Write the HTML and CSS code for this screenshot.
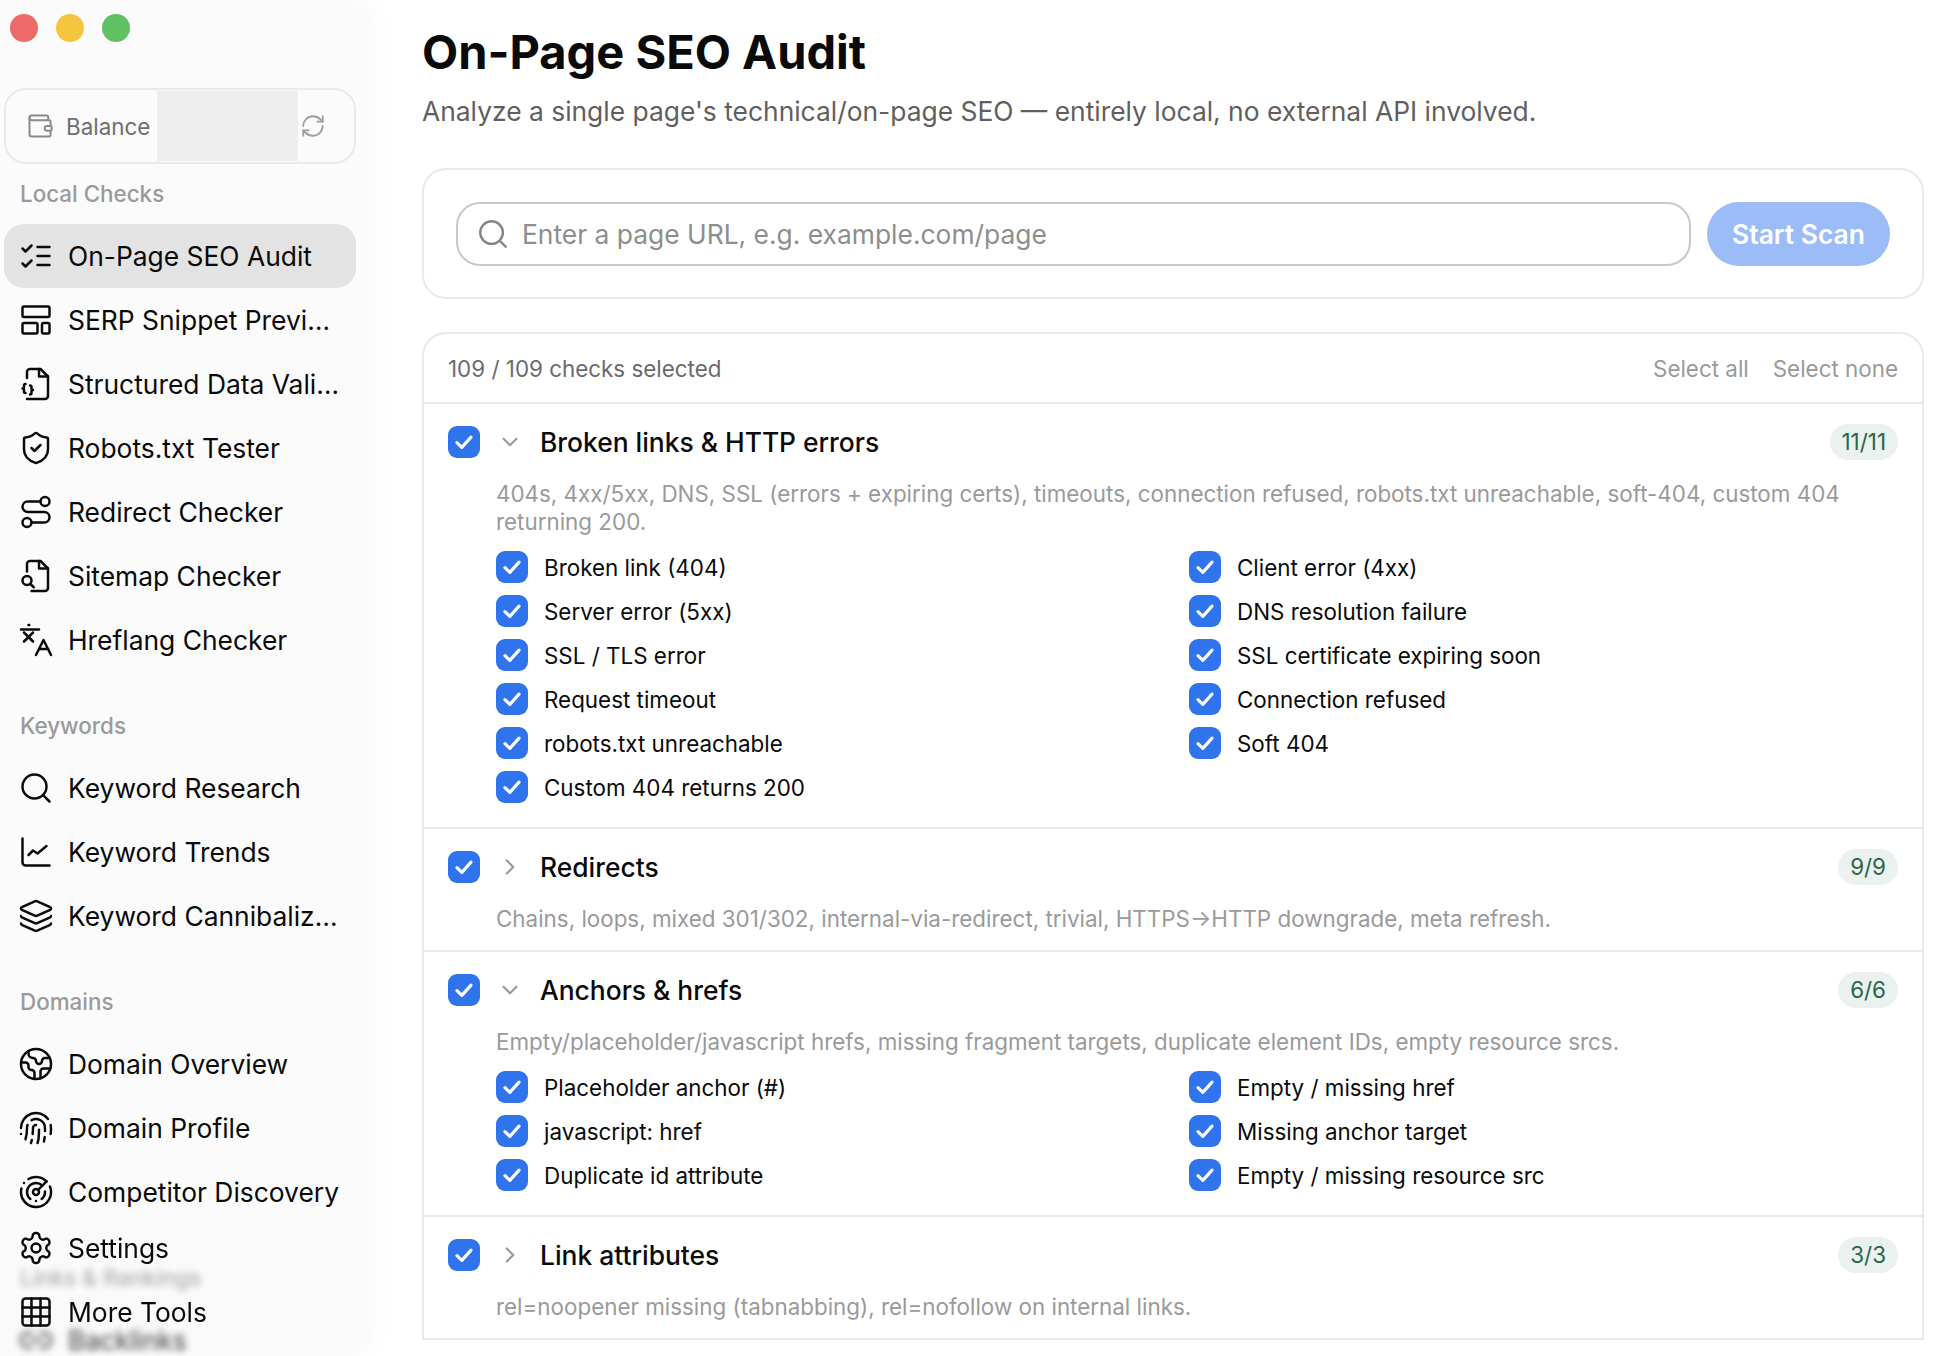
FILE: index.html
```html
<!DOCTYPE html>
<html lang="en">
<head>
    <meta charset="UTF-8">
    <title>On-Page SEO Audit</title>
    <link rel="stylesheet" href="styles.css">
</head>
<body>

    <!-- Icon sprite -->
    <svg class="sprite" xmlns="http://www.w3.org/2000/svg">
        <symbol id="i-wallet" viewBox="0 0 24 24"><path d="M19 7V4a1 1 0 0 0-1-1H5a2 2 0 0 0 0 4h15a1 1 0 0 1 1 1v4h-3a2 2 0 0 0 0 4h3a1 1 0 0 0 1-1v-2a1 1 0 0 0-1-1"/><path d="M3 5v14a2 2 0 0 0 2 2h15a1 1 0 0 0 1-1v-4"/></symbol>
        <symbol id="i-refresh" viewBox="0 0 24 24"><path d="M3 12a9 9 0 0 1 9-9 9.75 9.75 0 0 1 6.74 2.74L21 8"/><path d="M21 3v5h-5"/><path d="M21 12a9 9 0 0 1-9 9 9.75 9.75 0 0 1-6.74-2.74L3 16"/><path d="M8 16H3v5"/></symbol>
        <symbol id="i-list" viewBox="0 0 24 24"><path d="m3 17 2 2 4-4"/><path d="m3 7 2 2 4-4"/><path d="M13 6h8"/><path d="M13 12h8"/><path d="M13 18h8"/></symbol>
        <symbol id="i-layout" viewBox="0 0 24 24"><rect x="3" y="3" width="18" height="7" rx="1"/><rect x="3" y="14" width="10" height="7" rx="1"/><rect x="16" y="14" width="5" height="7" rx="1"/></symbol>
        <symbol id="i-braces" viewBox="0 0 24 24"><path d="M6 8V4a2 2 0 0 1 2-2h7l5 5v13a2 2 0 0 1-2 2H6"/><path d="M14 2v5h6"/><path d="M5 12a1 1 0 0 0-1 1v1a1 1 0 0 1-1 1 1 1 0 0 1 1 1v1a1 1 0 0 0 1 1"/><path d="M8 19a1 1 0 0 0 1-1v-1a1 1 0 0 1 1-1 1 1 0 0 1-1-1v-1a1 1 0 0 0-1-1"/></symbol>
        <symbol id="i-shield" viewBox="0 0 24 24"><path d="M20 13c0 5-3.5 7.5-7.66 8.95a1 1 0 0 1-.67-.01C7.5 20.5 4 18 4 13V6a1 1 0 0 1 1-1c2 0 4.5-1.2 6.24-2.72a1.17 1.17 0 0 1 1.52 0C14.51 3.81 17 5 19 5a1 1 0 0 1 1 1z"/><path d="m9 12 2 2 4-4"/></symbol>
        <symbol id="i-route" viewBox="0 0 24 24"><circle cx="6" cy="19" r="3"/><path d="M9 19h8.5a3.5 3.5 0 0 0 0-7h-11a3.5 3.5 0 0 1 0-7H15"/><circle cx="18" cy="5" r="3"/></symbol>
        <symbol id="i-filesearch" viewBox="0 0 24 24"><path d="M6 9V4a2 2 0 0 1 2-2h7l5 5v13a2 2 0 0 1-2 2H9"/><path d="M14 2v5h6"/><circle cx="6" cy="15" r="3"/><path d="m8.2 17.2 2.3 2.3"/></symbol>
        <symbol id="i-lang" viewBox="0 0 24 24"><path d="M2 5h12"/><path d="M7 2h.5"/><path d="m4 7 6 6"/><path d="m10 7-6 6"/><path d="m22 22-5-10-5 10"/><path d="M14 18h6"/></symbol>
        <symbol id="i-search" viewBox="0 0 24 24"><circle cx="11" cy="11" r="8"/><path d="m21 21-4.3-4.3"/></symbol>
        <symbol id="i-chart" viewBox="0 0 24 24"><path d="M3 3v16a2 2 0 0 0 2 2h16"/><path d="m7 14 3-3 3 2 6-5"/></symbol>
        <symbol id="i-layers" viewBox="0 0 24 24"><path d="M12.83 2.18a2 2 0 0 0-1.66 0L2.6 6.08a1 1 0 0 0 0 1.83l8.58 3.91a2 2 0 0 0 1.66 0l8.58-3.9a1 1 0 0 0 0-1.83z"/><path d="M2 12a1 1 0 0 0 .58.91l8.6 3.91a2 2 0 0 0 1.65 0l8.58-3.9A1 1 0 0 0 22 12"/><path d="M2 17a1 1 0 0 0 .58.91l8.6 3.91a2 2 0 0 0 1.65 0l8.58-3.9A1 1 0 0 0 22 17"/></symbol>
        <symbol id="i-earth" viewBox="0 0 24 24"><path d="M21.54 15H17a2 2 0 0 0-2 2v4.54"/><path d="M7 3.34V5a3 3 0 0 0 3 3a2 2 0 0 1 2 2c0 1.1.9 2 2 2a2 2 0 0 0 2-2c0-1.1.9-2 2-2h3.17"/><path d="M11 21.95V18a2 2 0 0 0-2-2a2 2 0 0 1-2-2v-1a2 2 0 0 0-2-2H2.05"/><circle cx="12" cy="12" r="10"/></symbol>
        <symbol id="i-finger" viewBox="0 0 24 24"><path d="M12 10a2 2 0 0 0-2 2c0 1.02-.1 2.51-.26 4"/><path d="M14 13.12c0 2.38 0 6.38-1 8.88"/><path d="M17.29 21.02c.12-.6.43-2.3.5-3.02"/><path d="M2 12a10 10 0 0 1 18-6"/><path d="M2 16h.01"/><path d="M21.8 16c.2-2 .131-5.354 0-6"/><path d="M5 19.5C5.5 18 6 15 6 12a6 6 0 0 1 .34-2"/><path d="M8.65 22c.21-.66.45-1.32.57-2"/><path d="M9 6.8a6 6 0 0 1 9 5.2v2"/></symbol>
        <symbol id="i-radar" viewBox="0 0 24 24"><path d="M19.07 4.93A10 10 0 0 0 6.99 3.34"/><path d="M4 6h.01"/><path d="M2.29 9.62A10 10 0 1 0 21.31 8.35"/><path d="M16.24 7.76A6 6 0 1 0 8.23 16.67"/><path d="M12 18h.01"/><path d="M17.99 11.66A6 6 0 0 1 15.77 16.67"/><circle cx="12" cy="12" r="2"/><path d="m13.41 10.59 5.66-5.66"/></symbol>
        <symbol id="i-gear" viewBox="0 0 24 24"><path d="M12.22 2h-.44a2 2 0 0 0-2 2v.18a2 2 0 0 1-1 1.73l-.43.25a2 2 0 0 1-2 0l-.15-.08a2 2 0 0 0-2.73.73l-.22.38a2 2 0 0 0 .73 2.73l.15.1a2 2 0 0 1 1 1.72v.51a2 2 0 0 1-1 1.74l-.15.09a2 2 0 0 0-.73 2.73l.22.38a2 2 0 0 0 2.73.73l.15-.08a2 2 0 0 1 2 0l.43.25a2 2 0 0 1 1 1.73V20a2 2 0 0 0 2 2h.44a2 2 0 0 0 2-2v-.18a2 2 0 0 1 1-1.73l.43-.25a2 2 0 0 1 2 0l.15.08a2 2 0 0 0 2.73-.73l.22-.39a2 2 0 0 0-.73-2.73l-.15-.08a2 2 0 0 1-1-1.74v-.5a2 2 0 0 1 1-1.74l.15-.09a2 2 0 0 0 .73-2.73l-.22-.38a2 2 0 0 0-2.73-.73l-.15.08a2 2 0 0 1-2 0l-.43-.25a2 2 0 0 1-1-1.73V4a2 2 0 0 0-2-2z"/><circle cx="12" cy="12" r="3"/></symbol>
        <symbol id="i-grid" viewBox="0 0 24 24"><rect x="3" y="3" width="18" height="18" rx="2"/><path d="M3 9h18"/><path d="M3 15h18"/><path d="M9 3v18"/><path d="M15 3v18"/></symbol>
        <symbol id="i-link" viewBox="0 0 24 24"><path d="M9 17H7A5 5 0 0 1 7 7h2"/><path d="M15 7h2a5 5 0 1 1 0 10h-2"/><path d="M8 12h8"/></symbol>
        <symbol id="i-down" viewBox="0 0 24 24"><path d="m6 9 6 6 6-6"/></symbol>
        <symbol id="i-right" viewBox="0 0 24 24"><path d="m9 18 6-6-6-6"/></symbol>
        <symbol id="i-check" viewBox="0 0 24 24"><path d="M5.5 12.5 10 17l8.5-9.5"/></symbol>
    </svg>

    <div class="app">

        <!-- Sidebar -->
        <aside class="sidebar">
            <div class="traffic">
                <span class="light red"></span>
                <span class="light yellow"></span>
                <span class="light green"></span>
            </div>

            <div class="balance">
                <svg class="balance-icon"><use href="#i-wallet"/></svg>
                <span class="balance-label">Balance</span>
                <span class="balance-value"></span>
                <svg class="balance-refresh"><use href="#i-refresh"/></svg>
            </div>

            <div class="nav-section first">Local Checks</div>
            <a class="nav-item active"><svg class="nav-icon"><use href="#i-list"/></svg><span class="nav-text">On-Page SEO Audit</span></a>
            <a class="nav-item"><svg class="nav-icon"><use href="#i-layout"/></svg><span class="nav-text">SERP Snippet Preview</span></a>
            <a class="nav-item"><svg class="nav-icon"><use href="#i-braces"/></svg><span class="nav-text">Structured Data Validator</span></a>
            <a class="nav-item"><svg class="nav-icon"><use href="#i-shield"/></svg><span class="nav-text">Robots.txt Tester</span></a>
            <a class="nav-item"><svg class="nav-icon"><use href="#i-route"/></svg><span class="nav-text">Redirect Checker</span></a>
            <a class="nav-item"><svg class="nav-icon"><use href="#i-filesearch"/></svg><span class="nav-text">Sitemap Checker</span></a>
            <a class="nav-item"><svg class="nav-icon"><use href="#i-lang"/></svg><span class="nav-text">Hreflang Checker</span></a>

            <div class="nav-section">Keywords</div>
            <a class="nav-item"><svg class="nav-icon"><use href="#i-search"/></svg><span class="nav-text">Keyword Research</span></a>
            <a class="nav-item"><svg class="nav-icon"><use href="#i-chart"/></svg><span class="nav-text">Keyword Trends</span></a>
            <a class="nav-item"><svg class="nav-icon"><use href="#i-layers"/></svg><span class="nav-text">Keyword Cannibalization</span></a>

            <div class="nav-section">Domains</div>
            <a class="nav-item"><svg class="nav-icon"><use href="#i-earth"/></svg><span class="nav-text">Domain Overview</span></a>
            <a class="nav-item"><svg class="nav-icon"><use href="#i-finger"/></svg><span class="nav-text">Domain Profile</span></a>
            <a class="nav-item"><svg class="nav-icon"><use href="#i-radar"/></svg><span class="nav-text">Competitor Discovery</span></a>

            <div class="nav-section">Links &amp; Rankings</div>
            <a class="nav-item"><svg class="nav-icon"><use href="#i-link"/></svg><span class="nav-text">Backlinks</span></a>

            <div class="sidebar-footer">
                <a class="nav-item"><svg class="nav-icon"><use href="#i-gear"/></svg><span class="nav-text">Settings</span></a>
                <a class="nav-item"><svg class="nav-icon"><use href="#i-grid"/></svg><span class="nav-text">More Tools</span></a>
            </div>
        </aside>

        <!-- Main content -->
        <main class="main">
            <h1>On-Page SEO Audit</h1>
            <p class="subtitle">Analyze a single page's technical/on-page SEO — entirely local, no external API involved.</p>

            <section class="card search-card">
                <div class="search-box">
                    <svg class="search-icon"><use href="#i-search"/></svg>
                    <span class="search-placeholder">Enter a page URL, e.g. example.com/page</span>
                </div>
                <button class="start-btn">Start Scan</button>
            </section>

            <section class="card checks-card">
                <div class="checks-head">
                    <span class="checks-count">109 / 109 checks selected</span>
                    <span class="checks-actions"><a>Select all</a><a>Select none</a></span>
                </div>

                <div class="group">
                    <div class="group-head">
                        <span class="box"><svg><use href="#i-check"/></svg></span>
                        <svg class="chevron"><use href="#i-down"/></svg>
                        <span class="group-title">Broken links &amp; HTTP errors</span>
                        <span class="badge">11/11</span>
                    </div>
                    <p class="group-desc">404s, 4xx/5xx, DNS, SSL (errors + expiring certs), timeouts, connection refused, robots.txt unreachable, soft-404, custom 404 returning 200.</p>
                    <div class="check-grid">
                        <label class="check"><span class="box"><svg><use href="#i-check"/></svg></span>Broken link (404)</label>
                        <label class="check"><span class="box"><svg><use href="#i-check"/></svg></span>Client error (4xx)</label>
                        <label class="check"><span class="box"><svg><use href="#i-check"/></svg></span>Server error (5xx)</label>
                        <label class="check"><span class="box"><svg><use href="#i-check"/></svg></span>DNS resolution failure</label>
                        <label class="check"><span class="box"><svg><use href="#i-check"/></svg></span>SSL / TLS error</label>
                        <label class="check"><span class="box"><svg><use href="#i-check"/></svg></span>SSL certificate expiring soon</label>
                        <label class="check"><span class="box"><svg><use href="#i-check"/></svg></span>Request timeout</label>
                        <label class="check"><span class="box"><svg><use href="#i-check"/></svg></span>Connection refused</label>
                        <label class="check"><span class="box"><svg><use href="#i-check"/></svg></span>robots.txt unreachable</label>
                        <label class="check"><span class="box"><svg><use href="#i-check"/></svg></span>Soft 404</label>
                        <label class="check"><span class="box"><svg><use href="#i-check"/></svg></span>Custom 404 returns 200</label>
                    </div>
                </div>

                <div class="group">
                    <div class="group-head">
                        <span class="box"><svg><use href="#i-check"/></svg></span>
                        <svg class="chevron"><use href="#i-right"/></svg>
                        <span class="group-title">Redirects</span>
                        <span class="badge">9/9</span>
                    </div>
                    <p class="group-desc">Chains, loops, mixed 301/302, internal-via-redirect, trivial, HTTPS→HTTP downgrade, meta refresh.</p>
                </div>

                <div class="group">
                    <div class="group-head">
                        <span class="box"><svg><use href="#i-check"/></svg></span>
                        <svg class="chevron"><use href="#i-down"/></svg>
                        <span class="group-title">Anchors &amp; hrefs</span>
                        <span class="badge">6/6</span>
                    </div>
                    <p class="group-desc">Empty/placeholder/javascript hrefs, missing fragment targets, duplicate element IDs, empty resource srcs.</p>
                    <div class="check-grid">
                        <label class="check"><span class="box"><svg><use href="#i-check"/></svg></span>Placeholder anchor (#)</label>
                        <label class="check"><span class="box"><svg><use href="#i-check"/></svg></span>Empty / missing href</label>
                        <label class="check"><span class="box"><svg><use href="#i-check"/></svg></span>javascript: href</label>
                        <label class="check"><span class="box"><svg><use href="#i-check"/></svg></span>Missing anchor target</label>
                        <label class="check"><span class="box"><svg><use href="#i-check"/></svg></span>Duplicate id attribute</label>
                        <label class="check"><span class="box"><svg><use href="#i-check"/></svg></span>Empty / missing resource src</label>
                    </div>
                </div>

                <div class="group">
                    <div class="group-head">
                        <span class="box"><svg><use href="#i-check"/></svg></span>
                        <svg class="chevron"><use href="#i-right"/></svg>
                        <span class="group-title">Link attributes</span>
                        <span class="badge">3/3</span>
                    </div>
                    <p class="group-desc">rel=noopener missing (tabnabbing), rel=nofollow on internal links.</p>
                </div>
            </section>
        </main>
    </div>

</body>
</html>
```

FILE: styles.css
```css
/* Base Styles */
:root {
    --color-blue: #2f74ec;
    --color-blue-light: #9bbcf7;
    --color-text: #0a0a0a;
    --color-muted: #9a9a9a;
    --color-line: #e9e9e9;
    --color-sidebar: #fbfbfb;
}

* {
    margin: 0;
    padding: 0;
    box-sizing: border-box;
}

html, body {
    height: 100%;
    overflow: hidden;
}

body {
    font-family: Inter, "Liberation Sans", sans-serif;
    color: var(--color-text);
    background-color: #ffffff;
}

.sprite {
    display: none;
}

svg {
    fill: none;
    stroke: currentColor;
    stroke-width: 2;
    stroke-linecap: round;
    stroke-linejoin: round;
}

.app {
    display: flex;
    height: 100vh;
}

/* Sidebar */
.sidebar {
    position: relative;
    flex: none;
    width: 372px;
    height: 100%;
    padding: 0 16px 0 4px;
    overflow: hidden;
    background-color: var(--color-sidebar);
    border-radius: 0 24px 24px 0;
    box-shadow: 0 0 30px rgb(0 0 0 / 0.03);
}

.traffic {
    display: flex;
    gap: 18px;
    height: 88px;
    padding: 14px 0 0 6px;
}

.light {
    width: 28px;
    height: 28px;
    border-radius: 50%;
}

.light.red { background-color: #ec6a67; }
.light.yellow { background-color: #f4c63e; }
.light.green { background-color: #5fc162; }

.balance {
    display: flex;
    align-items: center;
    width: 352px;
    height: 76px;
    padding-left: 20px;
    border: 2px solid var(--color-line);
    border-radius: 22px;
    color: #6f6f6f;
    font-size: 22.4px;
}

.balance-icon {
    width: 28px;
    height: 28px;
    margin-right: 12px;
    stroke-width: 1.7;
    color: #8a8a8a;
}

.balance-value {
    align-self: stretch;
    width: 141px;
    margin: 1px 0 1px 7px;
    background-color: #eeeeee;
}

.balance-refresh {
    width: 26px;
    height: 26px;
    margin-left: 2px;
    color: #a0a0a0;
    stroke-width: 1.7;
}

.nav-section {
    height: 30px;
    margin: 39px 0 15px;
    padding-left: 16px;
    color: var(--color-muted);
    font-size: 22.4px;
    font-weight: 500;
    line-height: 30px;
}

.nav-section.first {
    margin-top: 15px;
}

.nav-item {
    display: flex;
    align-items: center;
    width: 352px;
    height: 64px;
    padding: 0 14px;
    border-radius: 20px;
    font-size: 26.4px;
    white-space: nowrap;
}

.nav-item.active {
    background-color: #e3e3e3;
}

.nav-icon {
    flex: none;
    width: 36px;
    height: 36px;
    margin-right: 14px;
    stroke-width: 1.65;
}

.nav-text {
    overflow: hidden;
    text-overflow: ellipsis;
}

.sidebar-footer {
    position: absolute;
    left: 4px;
    right: 16px;
    bottom: 0;
    height: 140px;
    background-color: rgb(251 251 251 / 0.2);
    backdrop-filter: blur(3.5px);
}

/* Main content */
.main {
    flex: 1;
    min-width: 0;
    padding: 23px 26px 0 50px;
}

h1 {
    font-size: 47px;
    font-weight: 700;
    line-height: 58px;
}

.subtitle {
    margin-top: 12px;
    color: #5f5f5f;
    font-size: 26.4px;
    line-height: 36px;
}

.card {
    background-color: #ffffff;
    border: 2px solid var(--color-line);
    border-radius: 24px;
}

.search-card {
    display: flex;
    gap: 16px;
    height: 131px;
    margin-top: 39px;
    padding: 32px;
}

.search-box {
    display: flex;
    flex: 1;
    align-items: center;
    height: 64px;
    padding-left: 18px;
    border: 2px solid #c8c8c8;
    border-radius: 24px;
}

.search-icon {
    width: 34px;
    height: 34px;
    margin-right: 12px;
    color: #858585;
    stroke-width: 1.7;
}

.search-placeholder {
    color: #8e8e8e;
    font-size: 26.4px;
}

.start-btn {
    width: 183px;
    height: 64px;
    border: none;
    border-radius: 32px;
    background-color: var(--color-blue-light);
    color: #ffffff;
    font-family: inherit;
    font-size: 26.4px;
    font-weight: 600;
}

.checks-card {
    margin-top: 33px;
    border-bottom: none;
    border-radius: 24px 24px 0 0;
}

.checks-head {
    display: flex;
    justify-content: space-between;
    align-items: center;
    height: 70px;
    padding: 0 24px;
    border-bottom: 2px solid var(--color-line);
    font-size: 22.4px;
    color: #6b6b6b;
}

.checks-actions {
    display: flex;
    gap: 24px;
    color: var(--color-muted);
}

.group {
    padding: 22px 24px 17px;
    border-bottom: 2px solid var(--color-line);
}

.group-head {
    display: flex;
    align-items: center;
    height: 32px;
}

.box {
    display: flex;
    flex: none;
    justify-content: center;
    align-items: center;
    width: 32px;
    height: 32px;
    border-radius: 9px;
    background-color: var(--color-blue);
    color: #ffffff;
}

.box svg {
    width: 26px;
    height: 26px;
    stroke-width: 2.9;
}

.chevron {
    flex: none;
    width: 26px;
    height: 26px;
    margin: 0 17px;
    color: #9a9a9a;
}

.group-title {
    font-size: 26.4px;
    font-weight: 500;
}

.badge {
    margin-left: auto;
    padding: 0 12px;
    border-radius: 18px;
    background-color: #eaf1ee;
    color: #27664a;
    font-size: 22.4px;
    line-height: 36px;
}

.group-desc {
    margin: 22px 0 0 48px;
    color: var(--color-muted);
    font-size: 22.4px;
    line-height: 28px;
}

.check-grid {
    display: grid;
    grid-template-columns: 693px 1fr;
    margin: 9px 0 1px 48px;
}

.check {
    display: flex;
    align-items: center;
    gap: 16px;
    height: 44px;
    font-size: 22.4px;
}
```
